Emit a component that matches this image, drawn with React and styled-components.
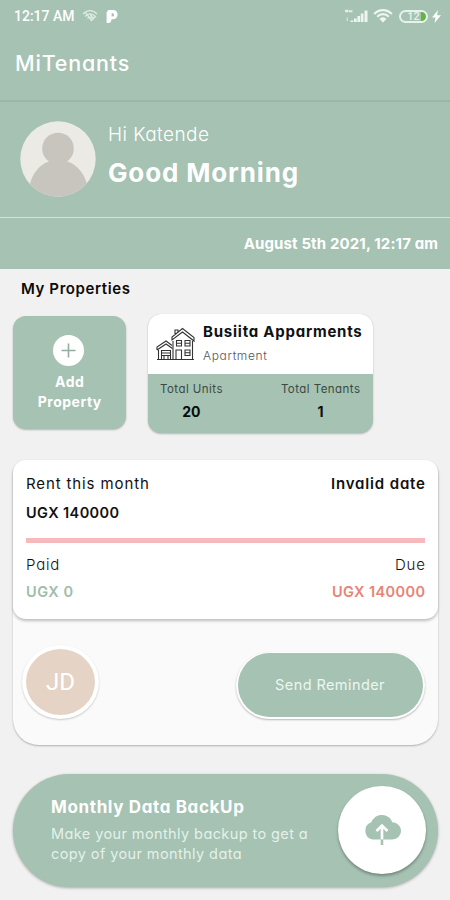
import styled, { createGlobalStyle } from "styled-components";

const properties = [
  { name: "Busiita Apparments", type: "Apartment", units: 20, tenants: 1 },
];

export default function App() {
  return (
    <Screen>
      <GlobalStyle />
      <StatusBar />
      <AppBar>
        <Text $size={21.5} $weight={500} $spacing={0.8}>
          MiTenants
        </Text>
      </AppBar>
      <Greeting>
        <Avatar />
        <div>
          <Text $size={19} $line={28} $weight={300} $spacing={0.45}>
            Hi Katende
          </Text>
          <Text $size={26} $line={47} $weight={700} $spacing={0.85}>
            Good Morning
          </Text>
        </div>
      </Greeting>
      <DateBar>
        <Text $size={15} $weight={700} $spacing={0.13}>
          August 5th 2021, 12:17 am
        </Text>
      </DateBar>
      <SectionTitle>My Properties</SectionTitle>
      <PropertyList>
        <AddCard>
          <AddCircle>
            <svg width="31" height="31" viewBox="0 0 31 31">
              <path d="M15.5 8.5v14M8.5 15.5h14" stroke="#94ad9f" strokeWidth="1.6" />
            </svg>
          </AddCircle>
          <Text $size={14} $line={20} $weight={700} $spacing={0.5}>
            Add
            <br />
            Property
          </Text>
        </AddCard>
        {properties.map((property) => (
          <PropertyCard key={property.name} {...property} />
        ))}
      </PropertyList>
      <RentCard>
        <RentSummary>
          <Row>
            <Text $size={15} $line={28} $spacing={0.88}>
              Rent this month
            </Text>
            <Text $size={15} $line={28} $weight={600} $spacing={0.85}>
              Invalid date
            </Text>
          </Row>
          <Text $size={14.5} $line={30} $weight={600} $spacing={0.4}>
            UGX 140000
          </Text>
          <Progress />
          <Row>
            <Text $size={15} $line={26} $weight={300} $spacing={0.8}>
              Paid
            </Text>
            <Text $size={15} $line={26} $weight={300} $spacing={0.9}>
              Due
            </Text>
          </Row>
          <Row>
            <Text $size={14.5} $line={28} $weight={600} $spacing={0.5} $color="#9dbdad">
              UGX 0
            </Text>
            <Text $size={14.5} $line={28} $weight={600} $spacing={0.4} $color="#e98374">
              UGX 140000
            </Text>
          </Row>
        </RentSummary>
        <RentActions>
          <Initials>JD</Initials>
          <ReminderButton>Send Reminder</ReminderButton>
        </RentActions>
      </RentCard>
      <Backup>
        <BackupText>
          <Text $size={17} $line={27} $weight={700} $spacing={0.63}>
            Monthly Data BackUp
          </Text>
          <BackupHint $size={14.5} $line={20} $spacing={0.4} $color="#e4f1e9">
            Make your monthly backup to get a
            <br />
            copy of your monthly data
          </BackupHint>
        </BackupText>
        <BackupButton>
          <svg width="38" height="32" viewBox="0 0 38 32">
            <path
              d="M9.5 25.5a9 9 0 0 1-1.2-17.3C10.3 3.6 14.2 1 19 1s8.9 3 10.2 7.3C34.5 8.7 38 12.3 38 17a8.5 8.5 0 0 1-8.5 8.5z"
              fill="#a5c2b3"
            />
            <path d="M19 25.5V12M13.5 17l5.5-5.5 5.5 5.5" fill="none" stroke="#fff" strokeWidth="2.6" />
            <path d="M19 25.5V31" stroke="#a5c2b3" strokeWidth="2.6" />
          </svg>
        </BackupButton>
      </Backup>
    </Screen>
  );
}

function StatusBar() {
  return (
    <StyledStatusBar>
      <Clock>12:17 AM</Clock>
      <svg width="16" height="14" viewBox="0 0 16 14" fill="none" stroke="#dcebe2" strokeWidth="1.3">
        <path d="M1 5C5 .5 11 .5 15 5M3 7.500c3-3.500 7-3.500 10 0M5.500 9.500c1.500-1.800 3.500-1.800 5 0M3.500 3.500l6 8M9 12l5-5M7.500 4.500l4 5" />
      </svg>
      <PandoraMark width="12" height="13" viewBox="0 0 12 13">
        <path
          fillRule="evenodd"
          d="M2.300 0H7c3 0 4.600 1.800 4.600 4.500C11.600 7.600 9.800 9.200 6.500 9.200H5.500C5.300 11.800 4.300 13 2.300 13H.6V2.300zM5.600 3.200v3.300c1.600.2 2.500-.5 2.500-1.800 0-1-.8-1.600-2.500-1.500z"
          fill="#fff"
        />
      </PandoraMark>
      <Spacer />
      <svg width="25" height="14" viewBox="0 0 25 14" fill="#edf6f0">
        <path d="M1 .8h3.500v2.400H1zM5 1.200h3.500v2H5z" opacity=".85" />
        <path d="M2.500 8.500H4V12H2.500z" opacity=".6" />
        <path d="M6.500 11.500h2.800V13H6.500zM10 9.500h2.700V13H10zM13.400 7h2.700v6h-2.700zM16.800 4.500h2.700V13h-2.700zM20.500 1.500h3V13h-3z" />
      </svg>
      <Wifi width="20" height="14" viewBox="0 0 20 14">
        <path d="M1.200 5C6-.2 14-.2 18.800 5M4.200 7.800c3.200-3.600 8.400-3.600 11.600 0" fill="none" stroke="#edf6f0" strokeWidth="2.2" />
        <path d="M6.500 10c2-2.200 5-2.200 7 0L10 13.500z" fill="#edf6f0" />
      </Wifi>
      <Battery>12</Battery>
      <svg width="9" height="13" viewBox="0 0 9 13">
        <path d="M6 0L0 7.500h3.500L2.500 13 9 5.200H5z" fill="#fff" />
      </svg>
    </StyledStatusBar>
  );
}

function Avatar() {
  return (
    <svg width="76" height="76" viewBox="0 0 76 76">
      <clipPath id="avatar">
        <circle cx="38" cy="38" r="37.7" />
      </clipPath>
      <g clipPath="url(#avatar)">
        <path d="M0 0h76v76H0z" fill="#eceae5" />
        <circle cx="38" cy="27.5" r="15.8" fill="#c8c4be" />
        <path d="M9 70C10 52 22 41 32 40h12c11 1 22 12 24 29v9H9z" fill="#c8c4be" />
      </g>
    </svg>
  );
}

function PropertyCard({ name, type, units, tenants }) {
  return (
    <StyledProperty>
      <PropertyHeader>
        <HouseIcon />
        <div>
          <Text $size={15} $line={25} $weight={700} $spacing={0.77} $color="#111">
            {name}
          </Text>
          <Text $size={12} $line={24} $weight={300} $spacing={0.65} $color="#555">
            {type}
          </Text>
        </div>
      </PropertyHeader>
      <Stats>
        <Stat label="Total Units" value={units} />
        <Stat label="Total Tenants" value={tenants} />
      </Stats>
    </StyledProperty>
  );
}

function Stat({ label, value }) {
  return (
    <StyledStat>
      <Text $size={11.5} $line={24} $spacing={0.45} $color="#3b4a42">
        {label}
      </Text>
      <Text $size={14} $line={22} $weight={700} $color="#080c0a">
        {value}
      </Text>
    </StyledStat>
  );
}

function HouseIcon() {
  return (
    <svg width="39" height="34" viewBox="0 0 39 34" fill="none" stroke="#333" strokeWidth="1.1">
      <path d="M1 32.500h37M2.500 32V23M17 32V14M36.500 32V14" />
      <path d="M1 23v-3l9-6 6 4.500M1 23l9-6 6.500 4.500M16 13v-3L26.500 1.500 38 10.500V14L26.500 5 16 13zM19 8V3h3v2.500" />
      <path d="M5.500 32v-8.500h9V32M5.500 26h9M5.500 28.500h9M8 32v-3.500h4V32" />
      <path d="M20.500 13.500h5v5.500h-5zM29 13.500h5v5.500h-5zM20.500 16.300h5M29 16.300h5M29 23h5v5.500h-5zM29 25.700h5M20 32v-9h5.500v9" />
    </svg>
  );
}

const GlobalStyle = createGlobalStyle`
  body {
    margin: 0;
    background: #f1f1f1;
    font-family: Inter, "Open Sans", sans-serif;
    font-feature-settings: "cv11";
  }

  * {
    box-sizing: border-box;
  }

  svg {
    display: block;
    flex-shrink: 0;
  }
`;

const Screen = styled.main`
  width: 450px;
  height: 900px;
  overflow: hidden;
  color: #fff;
`;

const Text = styled.div`
  margin-right: -${(props) => props.$spacing || 0}px;
  color: ${(props) => props.$color || "inherit"};
  font-size: ${(props) => props.$size}px;
  font-weight: ${(props) => props.$weight || 400};
  line-height: ${(props) => (props.$line ? `${props.$line}px` : "normal")};
  letter-spacing: ${(props) => props.$spacing || 0}px;
  white-space: nowrap;
`;

const StyledStatusBar = styled.header`
  display: flex;
  align-items: center;
  height: 32px;
  padding: 0 9px 0 14px;
  background: #a5c2b3;
`;

const Clock = styled.span`
  width: 68px;
  font: 500 14px Roboto, sans-serif;
`;

const PandoraMark = styled.svg`
  margin-left: 8px;
`;

const Spacer = styled.div`
  flex: 1;
`;

const Wifi = styled.svg`
  margin: 0 6px 0 4px;
`;

const Battery = styled.div`
  display: flex;
  align-items: center;
  justify-content: center;
  width: 29px;
  height: 13px;
  margin-right: 4px;
  border: 2px solid #e6f2eb;
  border-radius: 7px;
  background: linear-gradient(90deg, transparent 80%, #63b53c 80%);
  color: #e6f2eb;
  font: 500 11px Roboto, sans-serif;
`;

const AppBar = styled.div`
  display: flex;
  align-items: center;
  height: 70px;
  padding: 0 15px 7px;
  background: #a5c2b3;
  border-bottom: 2px solid #9ab7a8;
`;

const Greeting = styled.section`
  display: flex;
  align-items: flex-start;
  gap: 12px;
  height: 115px;
  padding: 19px 20px 0;
  background: #a5c2b3;
`;

const DateBar = styled.div`
  display: flex;
  align-items: center;
  justify-content: flex-end;
  height: 52px;
  padding-right: 12px;
  background: #a5c2b3;
  border-top: 1px solid #cfe3d8;
`;

const SectionTitle = styled.h2`
  margin: 0;
  padding-left: 21px;
  color: #0a0a0a;
  font-size: 15px;
  font-weight: 600;
  line-height: 39px;
  letter-spacing: 0.6px;
`;

const PropertyList = styled.section`
  display: flex;
  gap: 22px;
  padding: 6px 13px 0;
`;

const AddCard = styled.div`
  width: 113px;
  height: 113px;
  margin-top: 2px;
  padding-top: 19px;
  background: #a5c2b3;
  border-radius: 13px;
  box-shadow: 0 1px 2px rgba(0, 0, 0, 0.25);
  text-align: center;
`;

const AddCircle = styled.div`
  width: 31px;
  height: 31px;
  margin: 0 0 6px 40px;
  border-radius: 50%;
  background: #fff;
`;

const StyledProperty = styled.article`
  width: 225px;
  height: 119px;
  overflow: hidden;
  background: #a5c2b3;
  border-radius: 13px;
  box-shadow: 0 1px 2px rgba(0, 0, 0, 0.25);
`;

const PropertyHeader = styled.div`
  display: flex;
  align-items: center;
  gap: 8px;
  height: 60px;
  padding: 0 0 1px 8px;
  background: #fff;
`;

const Stats = styled.div`
  display: flex;
  justify-content: space-between;
  padding: 3px 13px 0 12px;
`;

const StyledStat = styled.div`
  text-align: center;
`;

const RentCard = styled.section`
  height: 285px;
  margin: 27px 12px 0 13px;
  background: #fafafa;
  border-radius: 14px 14px 26px 26px;
  box-shadow: 0 1px 2px rgba(0, 0, 0, 0.28);
`;

const RentSummary = styled.div`
  height: 159px;
  padding: 10px 13px 0;
  background: #fff;
  border-radius: 13px;
  box-shadow: 0 2px 3px rgba(0, 0, 0, 0.24);
  color: #111;
`;

const Row = styled.div`
  display: flex;
  justify-content: space-between;
`;

const Progress = styled.div`
  height: 5px;
  margin: 10px 0 9px;
  background: #f7b9bb;
`;

const RentActions = styled.div`
  display: flex;
  align-items: center;
  justify-content: space-between;
  height: 126px;
  padding: 6px 13px 0 9px;
`;

const Initials = styled.div`
  width: 77px;
  height: 74px;
  margin-bottom: 7px;
  border: 4px solid #fff;
  border-radius: 50%;
  background: #e5d4c6;
  box-shadow: 0 1px 2px rgba(0, 0, 0, 0.2);
  font: 400 24px/66px Roboto, sans-serif;
  text-align: center;
`;

const ReminderButton = styled.button`
  width: 189px;
  height: 67px;
  padding: 0 1px 0 0;
  border: 2px solid #fff;
  border-top-width: 1px;
  border-radius: 34px;
  background: #a5c2b3;
  box-shadow: 0 1px 2px rgba(0, 0, 0, 0.28);
  color: #edf6f0;
  font-family: inherit;
  font-feature-settings: inherit;
  font-size: 14.5px;
  letter-spacing: 0.42px;
`;

const Backup = styled.section`
  display: flex;
  justify-content: space-between;
  height: 113px;
  margin: 29px 12px 0 13px;
  padding: 12px 12px 0 38px;
  border-radius: 57px;
  background: #a5c2b3;
  box-shadow: 0 1px 3px rgba(0, 0, 0, 0.3);
`;

const BackupText = styled.div`
  padding-top: 8px;
`;

const BackupHint = styled(Text)`
  margin-top: 3px;
`;

const BackupButton = styled.div`
  display: flex;
  align-items: center;
  justify-content: center;
  width: 88px;
  height: 88px;
  border-radius: 50%;
  background: #fff;
  box-shadow: 0 2px 3px rgba(0, 0, 0, 0.3);
`;
